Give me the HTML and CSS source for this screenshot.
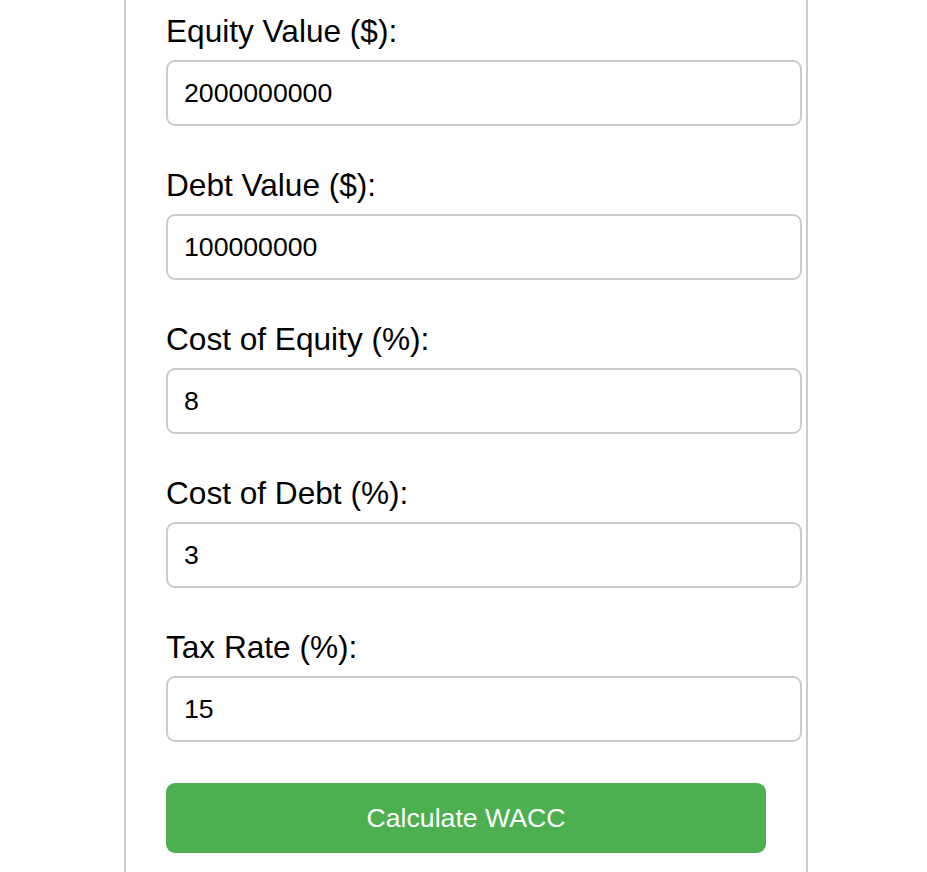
FILE: index.html
```html
<!DOCTYPE html>
<html lang="en">
<head>
<meta charset="utf-8">
<title>WACC Calculator</title>
<link rel="stylesheet" href="styles.css">
</head>
<body>
<div class="container">
  <form class="form">
    <div class="group">
      <label class="label" for="equity">Equity Value ($):</label>
      <input class="field" id="equity" type="text" value="2000000000">
    </div>
    <div class="group">
      <label class="label" for="debt">Debt Value ($):</label>
      <input class="field" id="debt" type="text" value="100000000">
    </div>
    <div class="group">
      <label class="label" for="coe">Cost of Equity (%):</label>
      <input class="field" id="coe" type="text" value="8">
    </div>
    <div class="group">
      <label class="label" for="cod">Cost of Debt (%):</label>
      <input class="field" id="cod" type="text" value="3">
    </div>
    <div class="group">
      <label class="label" for="tax">Tax Rate (%):</label>
      <input class="field" id="tax" type="text" value="15">
    </div>
    <button class="btn" type="button">Calculate WACC</button>
  </form>
</div>
</body>
</html>
```
FILE: styles.css
```css
html, body {
  margin: 0;
  padding: 0;
  background: #ffffff;
  font-family: "Liberation Sans", Arial, sans-serif;
  color: #000;
}

.container {
  box-sizing: content-box;
  width: 600px;
  margin-left: 124px;
  padding: 13px 40px 40px 40px;
  border-left: 2px solid #cccccc;
  border-right: 2px solid #cccccc;
  min-height: 900px;
}

.form {
  display: flex;
  flex-direction: column;
  margin: 0;
}

.group {
  display: flex;
  flex-direction: column;
  margin-bottom: 41px;
}

.label {
  display: block;
  font-size: 31.6px;
  line-height: 36px;
  height: 36px;
  margin-bottom: 11px;
  color: #000;
}

.field {
  box-sizing: content-box;
  width: 100%;
  height: 30px;
  padding: 16px 16px;
  border: 2px solid #cccccc;
  border-radius: 9px;
  font-family: "Liberation Sans", Arial, sans-serif;
  font-size: 26.67px;
  color: #000;
  background: #fff;
  outline: none;
  margin: 0;
}

.btn {
  box-sizing: border-box;
  width: 600px;
  height: 70px;
  border: none;
  border-radius: 9px;
  background: #4caf50;
  color: #ffffff;
  font-family: "Liberation Sans", Arial, sans-serif;
  font-size: 26.67px;
  cursor: pointer;
}
```
